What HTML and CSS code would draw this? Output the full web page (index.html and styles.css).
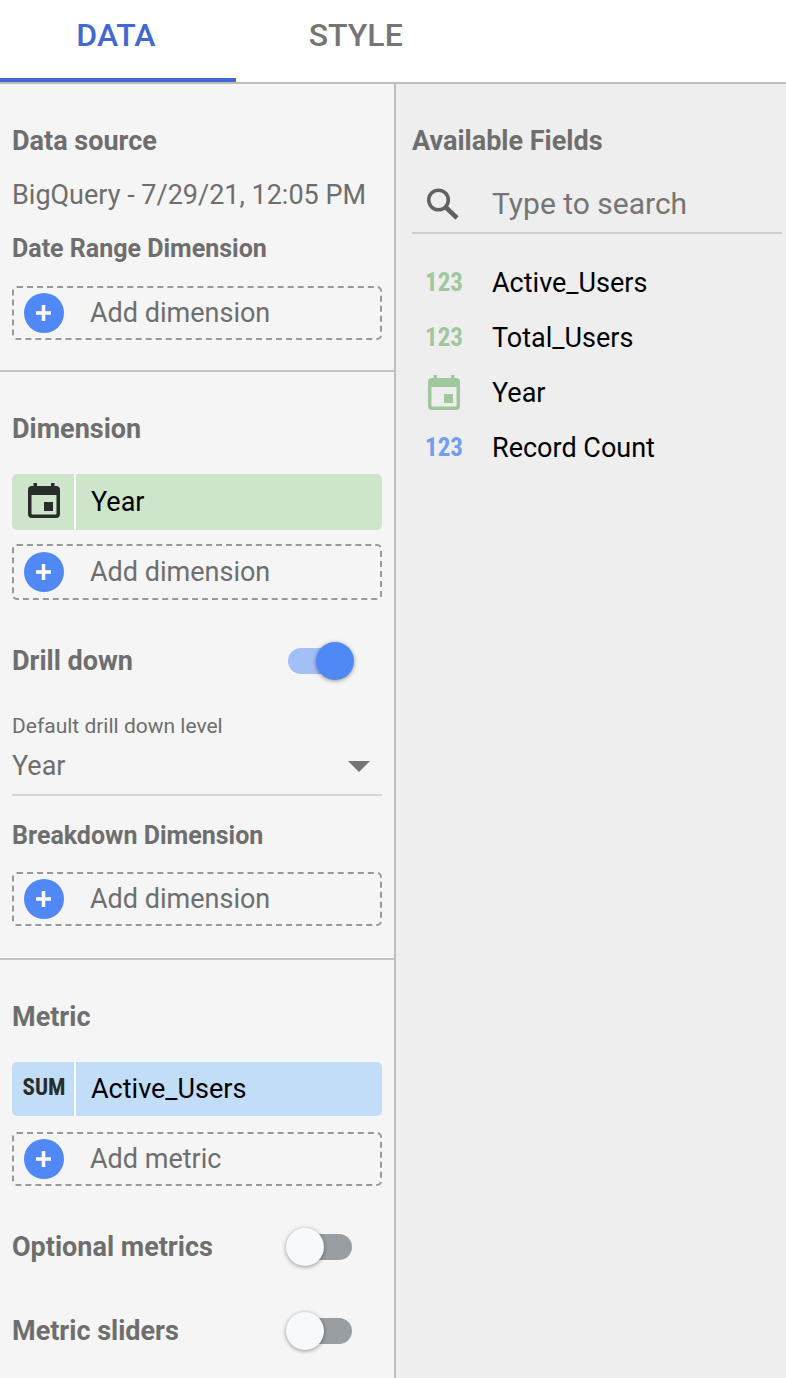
FILE: index.html
```html
<!DOCTYPE html>
<html lang="en">
<head>
<meta charset="utf-8">
<meta name="viewport" content="width=device-width, initial-scale=1">
<title>Chart properties</title>
<link rel="stylesheet" href="styles.css">
</head>
<body>
<svg class="sprite" aria-hidden="true">
  <symbol id="calendar" viewBox="0 1 32 36">
    <path fill="currentColor" fill-rule="evenodd" d="M5.500 1h3.500v3h14V1h3.500v3H28a4 4 0 0 1 4 4v24a4 4 0 0 1-4 4H4a4 4 0 0 1-4-4V8a4 4 0 0 1 4-4h1.500zM3.500 13v18.500a1 1 0 0 0 1 1h23a1 1 0 0 0 1-1V13zM16 20h9v9h-9z"/>
  </symbol>
  <symbol id="plus" viewBox="0 0 40 40">
    <circle cx="20" cy="20" r="20" fill="#5089f5"/>
    <path d="M12 20h15M19.500 12v16" stroke="#fff" stroke-width="3.500" fill="none"/>
  </symbol>
</svg>
<div class="panel">
  <nav class="tabs" role="tablist">
    <button class="tab tab-active" role="tab" aria-selected="true">DATA</button>
    <button class="tab" role="tab" aria-selected="false">STYLE</button>
  </nav>
  <div class="columns">
    <main class="config">
      <section class="section">
        <h2 class="title">Data source</h2>
        <p class="source">BigQuery - 7/29/21, 12:05 PM</p>
        <h3 class="subtitle">Date Range Dimension</h3>
        <button class="add"><svg class="plus"><use href="#plus"/></svg>Add dimension</button>
      </section>
      <section class="section section-dimension">
        <h2 class="title">Dimension</h2>
        <button class="chip chip-dimension"><span class="chip-icon"><svg class="calendar"><use href="#calendar"/></svg></span><span class="chip-label">Year</span></button>
        <button class="add add-tall"><svg class="plus"><use href="#plus"/></svg>Add dimension</button>
        <label class="toggle"><span class="title">Drill down</span><input class="switch" type="checkbox" role="switch" checked></label>
        <label class="level-label" for="level">Default drill down level</label>
        <div class="level">
          <select class="level-select" id="level"><option>Year</option></select>
          <svg class="caret" viewBox="0 0 22 11" aria-hidden="true"><path d="M0 0h22L11 11z" fill="#757575"/></svg>
        </div>
        <h3 class="subtitle subtitle-breakdown">Breakdown Dimension</h3>
        <button class="add"><svg class="plus"><use href="#plus"/></svg>Add dimension</button>
      </section>
      <section class="section">
        <h2 class="title">Metric</h2>
        <button class="chip chip-metric"><span class="chip-icon">SUM</span><span class="chip-label">Active_Users</span></button>
        <button class="add add-metric"><svg class="plus"><use href="#plus"/></svg>Add metric</button>
        <label class="toggle"><span class="title">Optional metrics</span><input class="switch" type="checkbox" role="switch"></label>
        <label class="toggle toggle-next"><span class="title">Metric sliders</span><input class="switch" type="checkbox" role="switch"></label>
      </section>
    </main>
    <aside class="fields">
      <h2 class="title">Available Fields</h2>
      <label class="search">
        <svg class="search-icon" viewBox="0 0 32 32" aria-hidden="true"><circle cx="11.500" cy="12" r="9.800" fill="none" stroke="#616161" stroke-width="3.600"/><path d="M18.500 19l11.500 11" stroke="#616161" stroke-width="4.500"/></svg>
        <input class="search-input" type="search" placeholder="Type to search" aria-label="Type to search">
      </label>
      <ul class="list">
        <li class="field"><span class="type type-green">123</span>Active_Users</li>
        <li class="field"><span class="type type-green">123</span>Total_Users</li>
        <li class="field"><span class="type type-green"><svg class="calendar"><use href="#calendar"/></svg></span>Year</li>
        <li class="field"><span class="type type-blue">123</span>Record Count</li>
      </ul>
    </aside>
  </div>
</div>
</body>
</html>
```
FILE: styles.css
```css
* { box-sizing: border-box; }
body { margin: 0; background: #f5f5f5; color: #6e6e6e; font: 27px/32px Roboto, sans-serif; }
h2, h3, p, ul { margin: 0; padding: 0; }
button, input, select { font: inherit; color: inherit; margin: 0; }
svg { display: block; flex: none; }
.sprite { position: absolute; width: 0; height: 0; }

.panel { min-height: 100vh; display: flex; flex-direction: column; }
.tabs { display: flex; height: 84px; background: #fff; border-bottom: 2px solid #bdbdbd; }
.tab { flex: 0 0 30%; padding: 0 0 8px 4px; border: 0; border-bottom: 4px solid transparent; background: none; font-size: 32px; font-weight: 500; color: #757575; }
.tab-active { padding: 0 4px 8px 0; color: #4169d1; border-bottom-color: #4169d1; }

.columns { flex: 1; display: grid; grid-template-columns: minmax(0, 396fr) minmax(0, 390fr); }
.config { border-right: 2px solid #bdbdbd; }
.section { display: flex; flex-direction: column; padding: 41px 12px 30px; }
.section + .section { border-top: 2px solid #c2c2c2; }
.section-dimension { padding-bottom: 32px; }

.title { font-size: 27px; line-height: 32px; font-weight: 700; }
.source { margin: 22px 0; white-space: nowrap; }
.subtitle { margin-bottom: 21px; font-size: 25px; line-height: 32px; font-weight: 700; }
.subtitle-breakdown { margin: 24px 0 20px; }

.add { display: flex; align-items: center; gap: 26px; height: 54px; padding: 0 10px; border: 2px dashed #999; border-radius: 5px; background: none; text-align: left; }
.add-tall { height: 56px; margin-top: 14px; }
.add-metric { margin-top: 16px; }
.plus { width: 40px; height: 40px; }

.chip { display: flex; margin-top: 29px; padding: 0; border: 0; border-radius: 5px; color: #000; text-align: left; }
.chip-dimension { height: 56px; background: #cee5cb; }
.chip-metric { height: 54px; background: #c2ddf8; }
.chip-icon { display: flex; align-items: center; justify-content: center; width: 64px; height: 100%; padding: 0 0 2px 2px; border-right: 2px solid #fff; color: #292d29; font: bold 23px/32px "Roboto Condensed", "Liberation Sans Narrow", Roboto, sans-serif; }
.chip-label { flex: 1; align-self: center; padding-left: 15px; }
.calendar { width: 32px; height: 36px; }

.toggle { display: flex; align-items: center; justify-content: space-between; height: 38px; margin-top: 42px; padding-right: 28px; }
.toggle-next { margin-top: 46px; }
.switch { appearance: none; display: grid; align-items: center; width: 68px; height: 38px; }
.switch::before, .switch::after { content: ""; grid-area: 1 / 1; }
.switch::before { height: 26px; margin: 0 2px; border-radius: 13px; background: #999ea2; }
.switch::after { width: 38px; height: 38px; border-radius: 50%; background: #f8f9fb; box-shadow: 0 1px 4px rgba(0, 0, 0, .4); }
.switch:checked::before { background: #a2bff6; }
.switch:checked::after { justify-self: end; background: #5089f5; }

.level-label { margin-top: 34px; font-size: 21px; line-height: 24px; }
.level { display: grid; align-items: center; height: 48px; margin-top: 10px; padding-bottom: 10px; border-bottom: 2px solid #d5d5d5; }
.level-select { grid-area: 1 / 1; appearance: none; width: 100%; padding: 0; border: 0; background: none; }
.caret { grid-area: 1 / 1; justify-self: end; width: 22px; height: 11px; margin-right: 12px; pointer-events: none; }

.fields { padding: 41px 4px 0 16px; background: #eee; }
.search { display: flex; align-items: center; gap: 33px; height: 58px; margin-top: 19px; padding-left: 15px; border-bottom: 2px solid #d0d0d0; }
.search-icon { width: 32px; height: 32px; }
.search-input { flex: 1; min-width: 0; padding: 0; border: 0; background: none; outline: 0; font-size: 30px; }
.search-input::placeholder { color: #757575; opacity: 1; }
.list { margin-top: 21px; list-style: none; }
.field { display: flex; align-items: center; height: 55px; color: #000; }
.type { display: flex; justify-content: center; width: 64px; margin-right: 16px; font: bold 25px/32px "Roboto Condensed", "Liberation Sans Narrow", Roboto, sans-serif; }
.type-green { color: #a1c79d; }
.type-blue { color: #719df0; }
```
